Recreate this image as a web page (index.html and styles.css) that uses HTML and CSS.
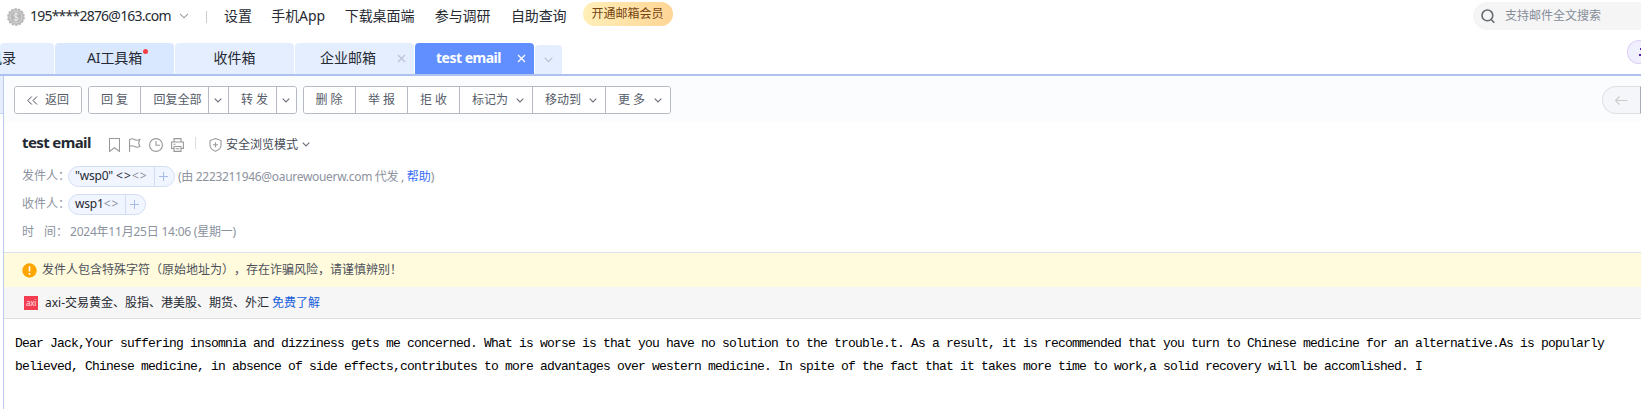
FILE: index.html
```
<!DOCTYPE html>
<html lang="zh-CN">
<head>
<meta charset="utf-8">
<title>test email</title>
<link rel="stylesheet" href="styles.css">
</head>
<body>
<header class="topbar">
  <svg class="avatar" viewBox="0 0 18 18"><circle cx="9" cy="9" r="7.8" fill="#b8b8b8" stroke="#b8b8b8" stroke-width="2" stroke-dasharray="2.5 1"/><circle cx="9" cy="9" r="6" fill="none" stroke="#d8d8d8"/><path d="M11.4 6.7C10.8 5.2 7 5.2 7 7.3c0 2 4.3 1.2 4.3 3.4 0 2.1-4.1 2.1-4.7.3M9 4.4v9.2" fill="none" stroke="#eee"/></svg>
  <span class="account">195****2876@163.com</span>
  <svg class="account-arrow" viewBox="0 0 10 6"><path d="M1 .8l4 4 4-4" fill="none" stroke="#999" stroke-width="1.1"/></svg>
  <i class="bar"></i>
  <nav class="links"><a>设置</a><a class="app">手机App</a><a>下载桌面端</a><a>参与调研</a><a>自助查询</a></nav>
  <span class="vip">开通邮箱会员</span>
  <div class="search">
    <svg width="14" height="15" viewBox="0 0 14 15"><circle cx="6.4" cy="6.4" r="5.4" fill="none" stroke="#666b70" stroke-width="1.6"/><path d="M10.2 10.5l3 3.2" stroke="#666b70" stroke-width="1.6"/></svg>
    <span>支持邮件全文搜索</span>
  </div>
</header>
<div class="tabs">
  <div class="tab tab-first">讯录</div>
  <div class="tab tab-ai"><span class="dot-label">AI工具箱<i class="dot"></i></span></div>
  <div class="tab">收件箱</div>
  <div class="tab tab-close">企业邮箱<svg class="close" viewBox="0 0 9 9"><path d="M1 1l7 7M8 1L1 8" stroke="#b8c4d8" stroke-width="1.3"/></svg></div>
  <div class="tab tab-close active"><span>test email</span><svg class="close" viewBox="0 0 9 9"><path d="M1 1l7 7M8 1L1 8" stroke="#fff" stroke-width="1.3"/></svg></div>
  <div class="tab-more"><svg width="9" height="6" viewBox="0 0 9 6"><path d="M.7.7l3.8 4L8.3.7" fill="none" stroke="#b3c0d5" stroke-width="1.1"/></svg></div>
  <div class="assistant"><svg width="12" height="12" viewBox="0 0 12 12"><path d="M1 3h3M0 9h5" stroke="#52249b" stroke-width="2"/></svg></div>
</div>
<div class="workspace">
  <aside class="side"></aside>
  <main class="mail">
    <div class="toolbar">
      <div class="group"><button class="btn back"><svg width="11" height="9" viewBox="0 0 11 9"><path d="M4.8.5l-4 4 4 4M10 .5l-4 4 4 4" fill="none" stroke="#444a55"/></svg><span>返回</span></button></div>
      <div class="group"><button class="btn w52">回 复</button><button class="btn w68">回复全部</button><button class="btn w20"><svg class="arr" viewBox="0 0 8 5"><path d="M.7.6L4 4 7.3.6"/></svg></button><button class="btn w48">转 发</button><button class="btn w19"><svg class="arr" viewBox="0 0 8 5"><path d="M.7.6L4 4 7.3.6"/></svg></button></div>
      <div class="group"><button class="btn w52 delete">删 除</button><button class="btn w52">举 报</button><button class="btn w52">拒 收</button><button class="btn w73">标记为<svg class="arr" viewBox="0 0 8 5"><path d="M.7.6L4 4 7.3.6"/></svg></button><button class="btn w73">移动到<svg class="arr" viewBox="0 0 8 5"><path d="M.7.6L4 4 7.3.6"/></svg></button><button class="btn w64">更 多<svg class="arr" viewBox="0 0 8 5"><path d="M.7.6L4 4 7.3.6"/></svg></button></div>
      <div class="pager"><svg width="13" height="9" viewBox="0 0 13 9"><path d="M4.5.5l-4 4 4 4M.5 4.5H12.5" fill="none" stroke="#ccc" stroke-width="1.1"/></svg></div>
    </div>
    <div class="title-row">
      <h1>test email</h1>
      <svg class="ic bookmark" width="11" height="14" viewBox="0 0 11 14"><path d="M.5.5h10v13L5.5 9.8l-5 3.700z"/></svg>
      <svg class="ic flag" width="12" height="14" viewBox="0 0 12 14"><path d="M.5 14V1.5c2-1 3.500-1 5 0s3 1 5.300 0L9.6 5l1.200 3.500c-2.300 1-3.800 1-5.300 0s-3-1-5 0"/></svg>
      <svg class="ic clock" width="14" height="14" viewBox="0 0 14 14"><circle cx="7" cy="7" r="6.4"/><path d="M7 3v4.300h4"/></svg>
      <svg class="ic printer" width="13" height="14" viewBox="0 0 13 14"><path d="M3 4V.6h7V4M3 10.5H.6V4h11.800v6.500H10M3 8.500h7v4.900H3zM4.500 10.800h4M2.500 6.300h2"/></svg>
      <i class="title-sep"></i>
      <svg class="ic shield" width="13" height="14" viewBox="0 0 13 14"><path d="M6.500.6l5.500 2v4.600c0 3-2.500 4.900-5.500 6-3-1.100-5.500-3-5.500-6V2.600zM6.500 4.300v5M4 6.800h5"/></svg>
      <span class="mode">安全浏览模式</span><svg class="arr" viewBox="0 0 8 5"><path d="M.7.6L4 4 7.3.6"/></svg>
    </div>
    <div class="meta sender"><span class="label">发件人：</span><div class="chip chip-from"><span class="who"><b>"wsp0" <i class="angle">&lt;&gt;</i></b><i class="angle">&lt;&gt;</i></span><span class="plus"></span></div><span class="proxy"><i class="proxy-text">(由 2223211946@oaurewouerw.com 代发 , </i><a>帮助</a>)</span></div>
    <div class="meta receiver"><span class="label">收件人：</span><div class="chip chip-to"><span class="who"><b>wsp1</b><i class="angle">&lt;&gt;</i></span><span class="plus"></span></div></div>
    <div class="meta date"><span class="label split"><i>时</i><i>间：</i></span><span class="when">2024年11月25日 14:06 (星期一)</span></div>
    <div class="warning"><svg width="15" height="15" viewBox="0 0 15 15"><circle cx="7.5" cy="7.5" r="7.2" fill="#ffa500"/><path d="M7.5 3.3v5.200M7.500 10v1.700" stroke="#fff" stroke-width="1.6"/></svg><span>发件人包含特殊字符（原始地址为），存在诈骗风险，请谨慎辨别！</span></div>
    <div class="promo"><span class="axi">axi</span><span>axi-交易黄金、股指、港美股、期货、外汇</span><a>免费了解</a></div>
    <article class="content">Dear Jack,Your suffering insomnia and dizziness gets me concerned. What is worse is that you have no solution to the trouble.t. As a result, it is recommended that you turn to Chinese medicine for an alternative.As is popularly<br>believed, Chinese medicine, in absence of side effects,contributes to more advantages over western medicine. In spite of the fact that it takes more time to work,a solid recovery will be accomlished. I</article>
  </main>
</div>
</body>
</html>
```
FILE: styles.css
```
* { box-sizing: border-box; }
html, body { height: 100%; overflow: hidden; }
body { margin: 0; background: #fff; color: #262a33; font: 12px/18px "Noto Sans", "Noto Sans CJK SC", sans-serif; white-space: nowrap; text-spacing-trim: space-all; }
i { font-style: normal; }
svg { display: block; flex: none; }
.topbar { height: 43px; display: flex; align-items: flex-start; padding-left: 7px; font-size: 14px; line-height: 20px; }
.avatar { width: 18px; height: 18px; margin-top: 8px; }
.account { width: 140px; margin: 6px 0 0 5px; letter-spacing: -.78px; }
.account-arrow { width: 10px; height: 6px; margin: 13px 0 0 9px; }
.bar { width: 1px; height: 12px; background: #ccc; margin: 11px 0 0 17px; }
.links { display: flex; gap: 20.5px; margin: 6px 0 0 17px; letter-spacing: -.1px; }
.links .app { width: 53px; margin-left: -1px; }
.vip { width: 90px; height: 24px; margin: 2px 0 0 16px; border-radius: 12px; background: linear-gradient(90deg, #ffefb8, #ffd596); color: #754310; font-size: 12px; line-height: 23px; text-align: center; }
.search { margin: 2px 0 0 auto; width: 168px; height: 28px; flex: none; border-radius: 14px 0 0 14px; background: #f5f5f5; display: flex; align-items: center; gap: 10px; padding-left: 8px; font-size: 12px; color: #858c99; }
.tabs { height: 33px; border-bottom: 2px solid #adc2ee; display: flex; gap: 1px; font-size: 14px; }
.tab { width: 119px; height: 31px; border-radius: 4px 4px 0 0; background: #e5eeff; display: flex; justify-content: center; align-items: center; padding-bottom: 1px; }
.tab-first { width: 54px; justify-content: flex-end; padding-right: 38px; }
.tab-ai { background: #d9e7ff; }
.dot-label { position: relative; letter-spacing: -.1px; }
.dot { position: absolute; width: 5px; height: 5px; border-radius: 50%; background: #f43f45; right: -6px; top: 0; }
.tab-close { justify-content: flex-start; padding-left: 25px; }
.close { width: 9px; height: 9px; margin-left: auto; margin-right: 8px; }
.active { padding-left: 21px; background: #628fff; color: #fff; font-weight: bold; }
.active span { letter-spacing: -.5px; }
.tab-more { width: 27px; height: 29px; margin-top: 2px; border-radius: 4px 4px 0 0; background: #e5eeff; display: grid; place-items: center; }
.assistant { width: 14px; height: 24px; margin: -3px 0 0 auto; border: 1px solid #decff9; border-right: 0; border-radius: 12px 0 0 12px; background: #f0effd; display: flex; align-items: center; padding-left: 11px; overflow: hidden; }
.workspace { display: flex; height: 333px; }
.side { width: 3px; flex: none; background: linear-gradient(#e5eeff 37px, #c4d3ef 37px, #c4d3ef 38px, #fff 38px); }
.mail { flex: 1; min-width: 0; border-left: 1px solid #bacbed; }
.toolbar { height: 46px; padding: 10px 0 0 10px; background: #fbfcfe; display: flex; gap: 6px; }
.group { height: 28px; border: 1px solid #b6bac4; border-radius: 3px; background: #fff; display: flex; overflow: hidden; }
.btn { height: 26px; padding: 0; border: 0; border-right: 1px solid #b6bac4; background: #fff; font: inherit; color: #555b68; display: flex; align-items: center; justify-content: center; }
.btn:last-child { border-right: 0; }
.back { width: 66px; gap: 7px; }
.w52 { width: 52px; }
.delete { padding-right: 1px; }
.w68 { width: 68px; padding-left: 6px; }
.w20 { width: 20px; padding-right: 1px; }
.w19 { width: 19px; padding-right: 1px; }
.w48 { width: 48px; padding-left: 4px; }
.w73 { width: 73px; gap: 8px; padding-left: 4px; }
.w64 { width: 64px; gap: 9px; padding-left: 4px; }
.arr { width: 8px; height: 5px; fill: none; stroke: #6b707a; stroke-width: 1.1; }
.pager { width: 39px; height: 28px; margin-left: auto; border: 1px solid #dfe1e6; border-right: 1px solid #a9adb7; border-radius: 14px 0 0 14px; background: #f5f6fa; display: flex; align-items: center; padding-left: 12px; }
.title-row { height: 41px; display: flex; align-items: center; padding: 4px 0 0 18px; }
h1 { width: 69px; margin: -5px 18px 0 0; font-size: 15px; line-height: 20px; letter-spacing: -.62px; }
.ic { fill: none; stroke: #999; stroke-width: 1.1; }
.flag { margin-left: 9px; }
.clock { margin-left: 8px; }
.printer { margin-left: 8px; }
.title-sep { width: 1px; height: 12px; margin: -3px 13px 0 11px; background: #ddd; }
.mode { margin: 0 4px 0 4px; color: #444a55; }
.meta { display: flex; align-items: center; padding-left: 18px; color: #8c929e; }
.label { width: 46px; }
.sender { height: 26px; }
.receiver { height: 30px; }
.date { height: 33px; padding-bottom: 7px; }
.split { display: flex; gap: 10px; }
.chip { height: 21px; border: 1px solid #d3def5; border-radius: 11px; background: #f0f5ff; display: flex; line-height: 18px; }
.chip-from { width: 107px; }
.chip-to { width: 78px; }
.who { flex: 1; padding-left: 6px; letter-spacing: -.2px; }
.who b { color: #262a33; font-weight: normal; }
.who .angle { letter-spacing: 1.1px; }
.plus { width: 20px; border-left: 1px solid #d3def5; background: linear-gradient(#a6bbe5, #a6bbe5) 4px 9px / 9px 1px no-repeat, linear-gradient(#a6bbe5, #a6bbe5) 8px 5px / 1px 9px no-repeat; }
.proxy { margin-left: 3px; padding-top: 2px; }
.proxy-text { letter-spacing: -.31px; }
.proxy a { color: #386df5; }
.when { margin-left: 2px; letter-spacing: -.22px; }
.warning { height: 35px; border-top: 1px solid #dae1ef; background: #fffbdc; display: flex; align-items: center; gap: 5px; padding-left: 18px; color: #4d505a; }
.promo { height: 32px; border-bottom: 1px solid #dedfe1; background: #f6f6f6; display: flex; align-items: center; padding-left: 20px; }
.axi { width: 14px; height: 14px; margin-right: 7px; background: #f43d50; color: #ffe5e8; font-size: 8px; line-height: 13px; text-align: center; letter-spacing: -.3px; }
.promo a { margin-left: 3px; color: #1760db; }
.content { padding: 13px 0 0 11px; color: #000; font: 13px/23px "Liberation Mono", monospace; letter-spacing: -.801px; }
```
